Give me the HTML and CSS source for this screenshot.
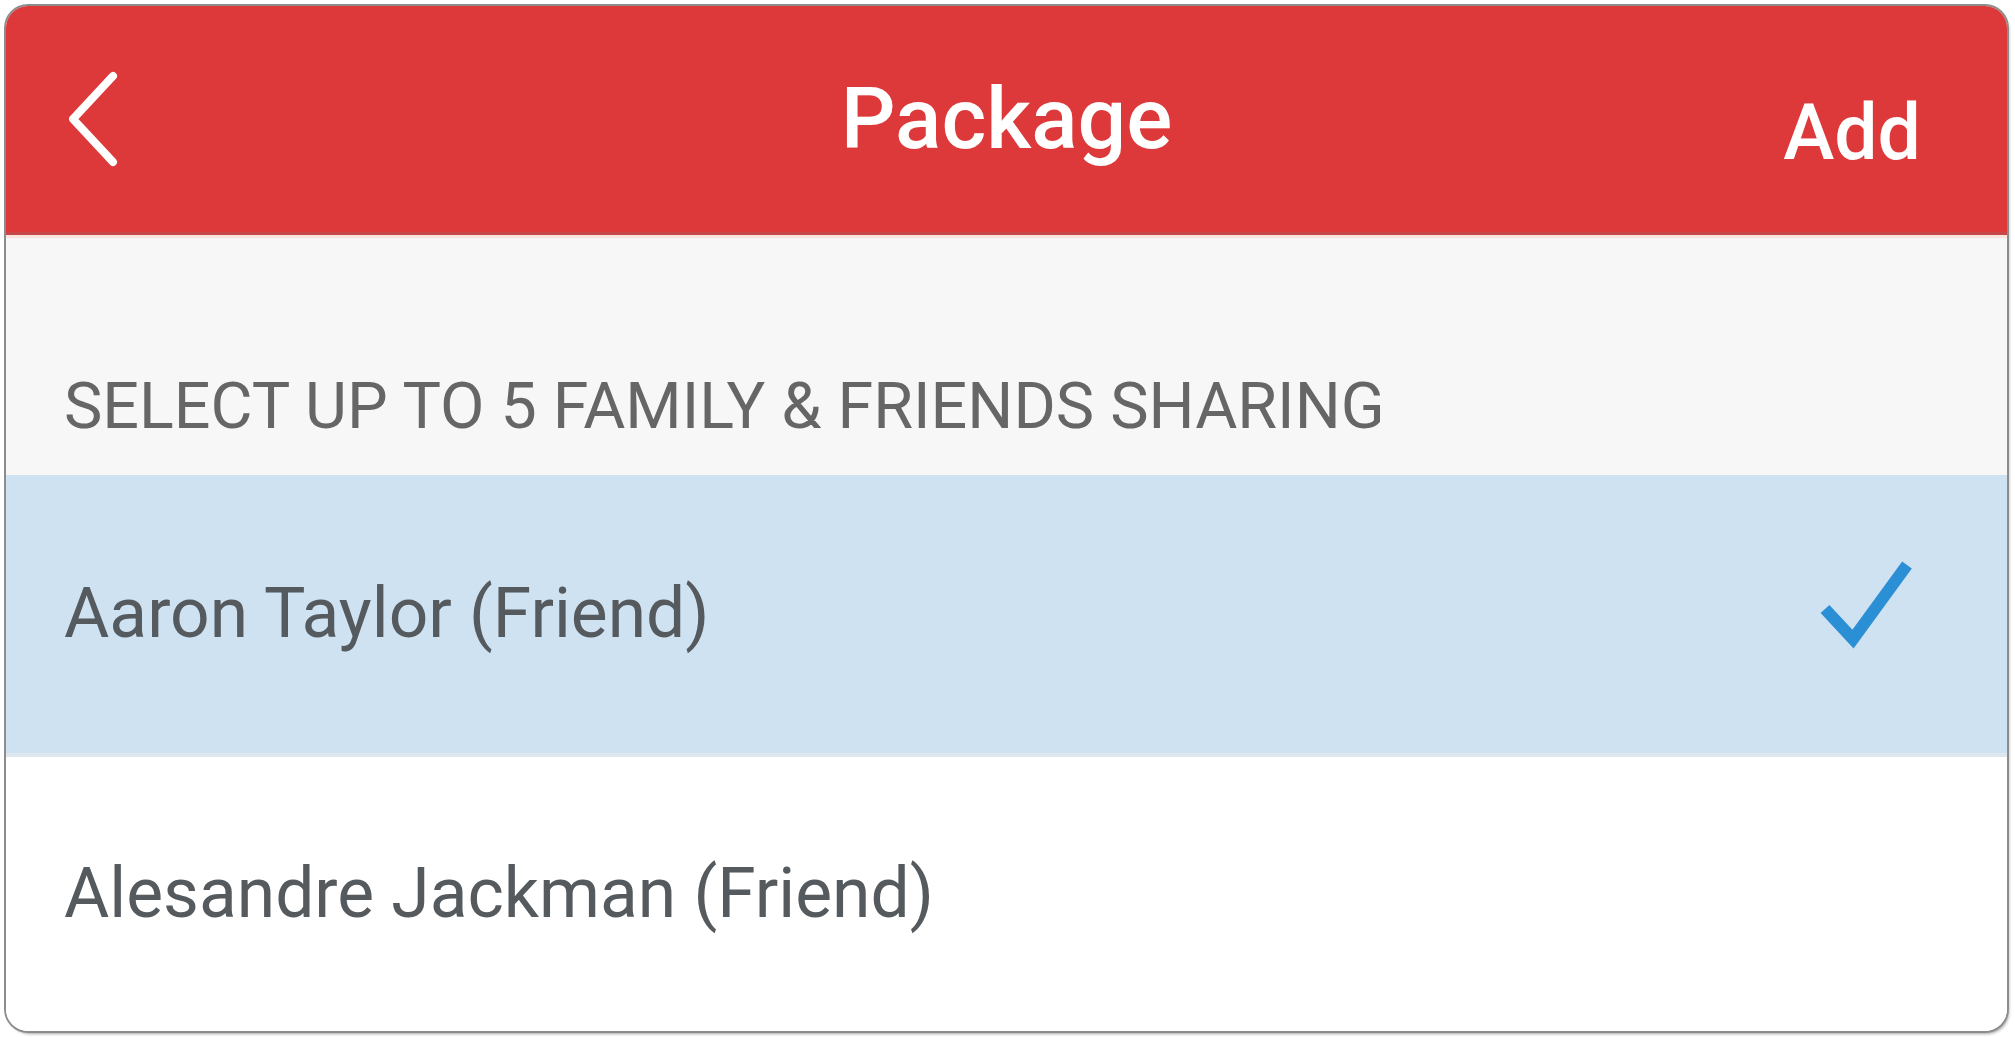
FILE: index.html
```html
<!DOCTYPE html>
<html lang="en">
<head>
<meta charset="utf-8">
<title>Package</title>
<link rel="stylesheet" href="styles.css">
</head>
<body>
<div class="page">
  <div class="card">
    <header class="nav">
      <div class="nav-left">
        <svg class="back" viewBox="0 0 50 96" width="50" height="96" aria-hidden="true">
          <polyline points="44,5 4,48 44,91" fill="none" stroke="#fff" stroke-width="8" stroke-linecap="round" stroke-linejoin="round"/>
        </svg>
      </div>
      <h1 class="nav-title">Package</h1>
      <div class="nav-right"><span class="nav-action">Add</span></div>
    </header>
    <section class="section-head">
      <span class="section-label">SELECT UP TO 5 FAMILY &amp; FRIENDS SHARING</span>
    </section>
    <ul class="list">
      <li class="row selected">
        <span class="row-name">Aaron Taylor (Friend)</span>
        <svg class="check" viewBox="0 0 100 100" width="100" height="100" aria-hidden="true">
          <polyline points="10,50 38,80 92,6" fill="none" stroke="#2b8fd6" stroke-width="12" stroke-linecap="butt" stroke-linejoin="miter"/>
        </svg>
      </li>
      <li class="row">
        <span class="row-name">Alesandre Jackman (Friend)</span>
      </li>
    </ul>
  </div>
</div>
</body>
</html>
```

FILE: styles.css
```css
* { box-sizing: border-box; }
html, body {
  margin: 0;
  padding: 0;
  background: #ffffff;
}
body {
  font-family: Roboto, "Liberation Sans", Arial, sans-serif;
}
.page {
  padding: 6px 8px 6px 6px;
  height: 1037px;
}
.card {
  height: 1025px;
  border-radius: 22px;
  overflow: hidden;
  background: #ffffff;
  box-shadow: 0 0 0 2px #8c8c8c, 2px 3px 3px rgba(0,0,0,0.35);
  display: flex;
  flex-direction: column;
}
.nav {
  height: 229px;
  flex: none;
  background: #dd393a;
  border-bottom: 3px solid #c6474a;
  box-shadow: 0 3px 0 #fbe3de;
  display: grid;
  grid-template-columns: 1fr auto 1fr;
  align-items: center;
  position: relative;
  z-index: 1;
}
.nav-left {
  padding-left: 63px;
  display: flex;
  align-items: center;
  padding-bottom: 0;
}
.back { display: block; }
.nav-title {
  margin: 0;
  color: #ffffff;
  font-size: 86px;
  font-weight: 500;
  line-height: 1;
  padding-bottom: 0;
}
.nav-right {
  display: flex;
  justify-content: flex-end;
  padding-right: 86px;
  padding-top: 28px;
}
.nav-action {
  color: #ffffff;
  font-size: 77px;
  font-weight: 500;
  line-height: 1;
}
.section-head {
  height: 240px;
  flex: none;
  background: #f7f7f7;
  display: flex;
  align-items: flex-end;
  padding: 0 0 36px 58px;
}
.section-label {
  color: #666666;
  font-size: 64.6px;
  line-height: 1;
  white-space: nowrap;
}
.list {
  list-style: none;
  margin: 0;
  padding: 0;
  flex: 1;
  display: flex;
  flex-direction: column;
}
.row {
  display: flex;
  align-items: center;
  justify-content: space-between;
  padding: 0 92px 0 58px;
  background: #ffffff;
  flex: 1;
}
.row.selected {
  flex: none;
  height: 282px;
  background: #cfe2f1;
  border-bottom: 4px solid #dfe7ee;
}
.row-name {
  color: #555a5e;
  font-size: 69.5px;
  line-height: 1;
  white-space: nowrap;
}
.check {
  display: block;
  margin-top: -10px;
}
```
